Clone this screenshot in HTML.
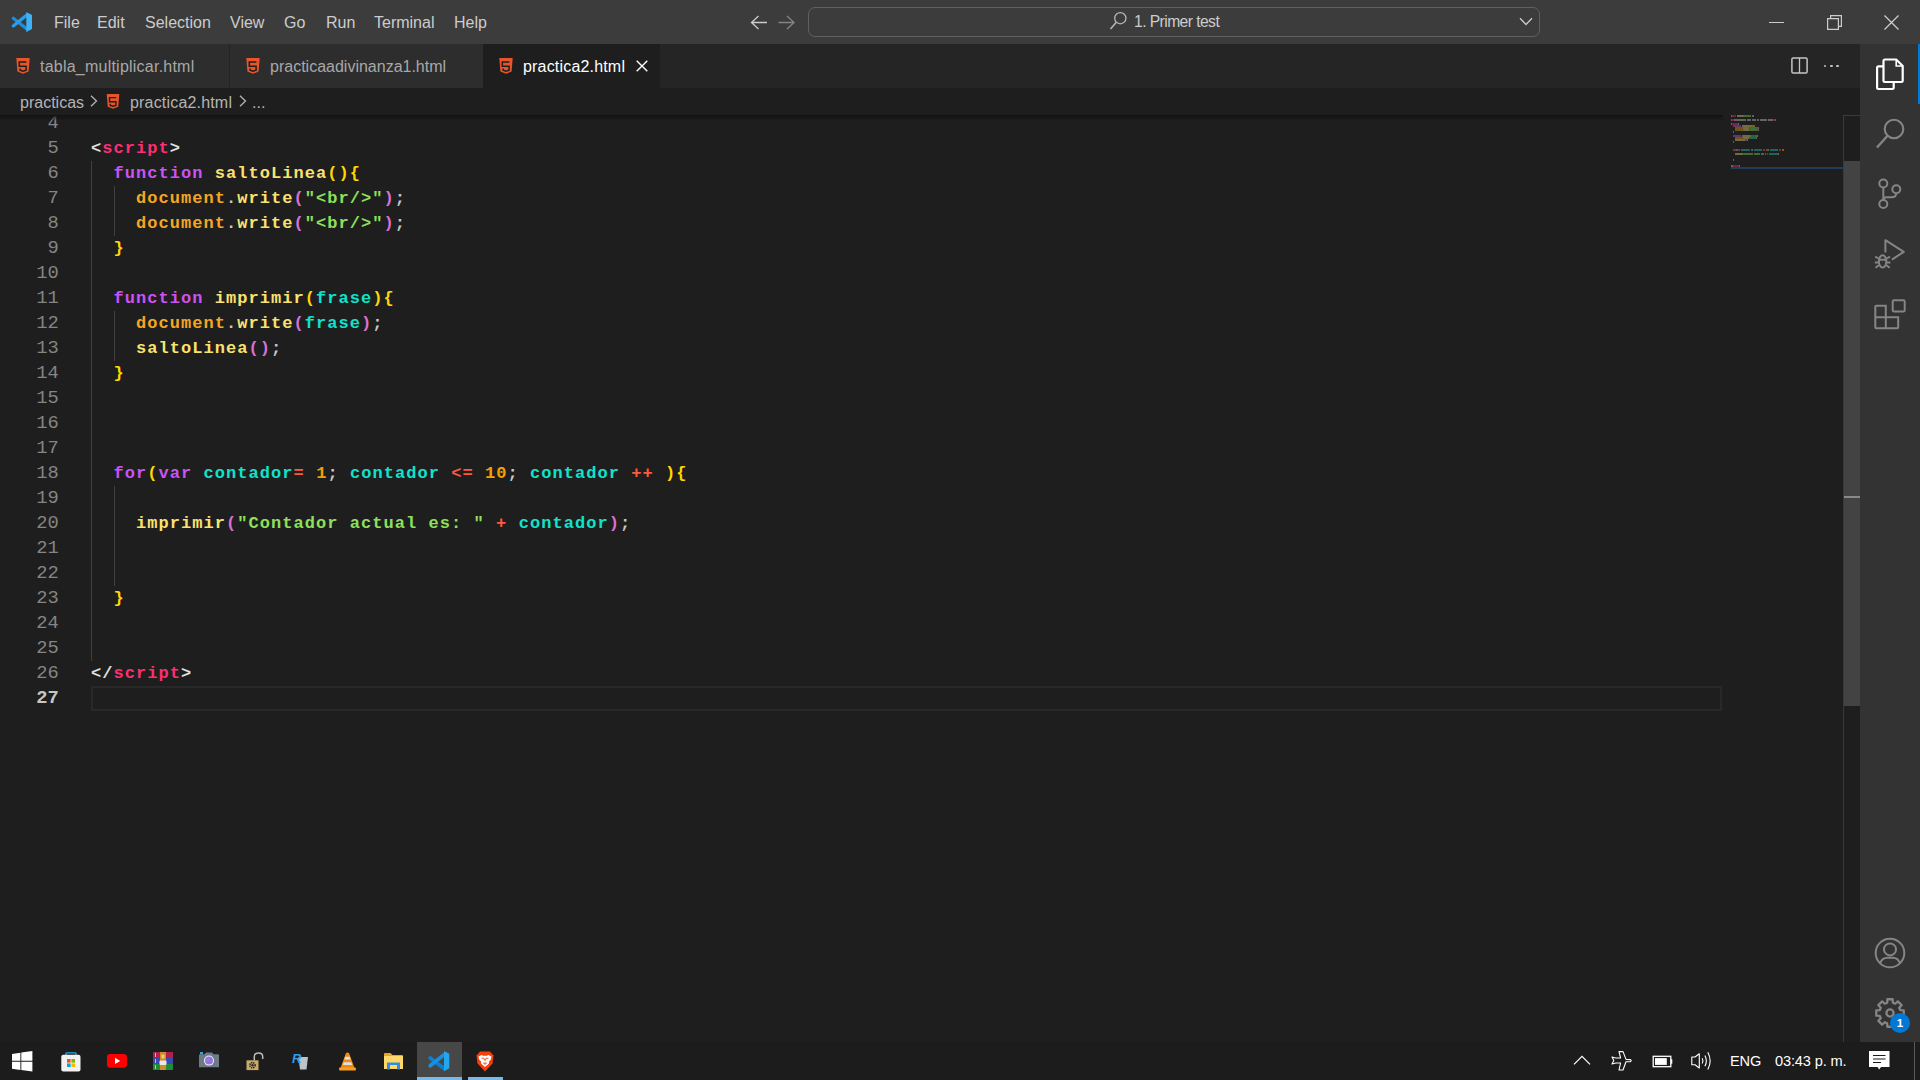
<!DOCTYPE html>
<html><head><meta charset="utf-8">
<style>
*{margin:0;padding:0;box-sizing:border-box}
html,body{width:1920px;height:1080px;overflow:hidden;background:#1e1e1e;font-family:"Liberation Sans",sans-serif}
.abs{position:absolute}
svg{position:absolute;overflow:visible}
#title{left:0;top:0;width:1920px;height:44px;background:#3c3c3c}
.menu{position:absolute;top:13px;font-size:16px;color:#cccccc;line-height:20px;white-space:nowrap}
#cc{left:808px;top:7px;width:732px;height:30px;border:1px solid #606060;border-radius:7px;background:#3c3c3c}
#cctxt{left:1134px;top:12.3px;font-size:15.7px;letter-spacing:-0.58px;line-height:20px;color:#cccccc;white-space:nowrap}
#tabs{left:0;top:44px;width:1860px;height:44px;background:#252526}
.tab{position:absolute;top:0;height:44px;background:#2d2d2d}
.tabtxt{position:absolute;top:13px;font-size:16px;line-height:20px;color:#a8a8a8;white-space:nowrap}
#crumbs{left:0;top:88px;width:1860px;height:27px;background:#1e1e1e}
.crumb{position:absolute;top:5px;font-size:16px;line-height:20px;color:#b4b4b4;white-space:nowrap}
#editor{left:0;top:115px;width:1860px;height:927px;background:#1e1e1e;overflow:hidden}
#shadow{left:0;top:0;width:1843px;height:6px;background:linear-gradient(#121212,rgba(30,30,30,0))}
.ln{position:absolute;left:0;width:58.8px;text-align:right;font-family:"Liberation Mono",monospace;font-size:18.75px;line-height:25px;height:25px;color:#858585;white-space:pre}
.ln.cur{color:#c6c6c6;font-weight:bold}
.cl{position:absolute;left:91px;font-family:"Liberation Mono",monospace;font-weight:bold;font-size:17px;letter-spacing:1.05px;line-height:25px;height:25px;color:#d4d4d4;white-space:pre}
.guide{position:absolute;width:1px;background:#404040}
#curline{left:91px;top:571px;width:1631px;height:25px;border:2px solid #282828}
#minimap{left:1731px;top:0}
.mm{position:absolute;height:1px;margin-top:0.5px;opacity:.75}
#vscroll{left:1843px;top:0;width:17px;height:927px;border-left:1px solid #3a3a3a;border-top:1px solid #3a3a3a}
#slider{left:1844px;top:46px;width:16px;height:545px;background:#434343}
#activity{left:1860px;top:44px;width:60px;height:998px;background:#333333}
#taskbar{left:0;top:1042px;width:1920px;height:38px;background:#1c1c1c}
.tray{position:absolute;top:9px;font-size:14.6px;letter-spacing:-0.15px;line-height:20px;color:#ffffff;white-space:nowrap}
/* token colors */
.t{color:#e0e0e0}.tg{color:#ff2d73}.kw{color:#cc52f5}.fn{color:#fbe26e}.ob{color:#f5a623}
.br1{color:#ffd700}.br2{color:#da70d6}.st{color:#8ee05a}.pr{color:#0fe3cc}.op{color:#ff5a3c}.nu{color:#f5a000}.pu{color:#c8c8c8}
</style></head><body>
<svg width="0" height="0" style="position:absolute">
  <defs>
    <symbol id="h5" viewBox="0 0 14 16">
      <path d="M0.3 0H13.7L12.6 13.6L7 15.8L1.4 13.6Z" fill="#e8552a"/>
      <path d="M10.4 3.9H3.3V8.3H10.1V12.2L7 13.1L4.1 12.2V10.4" fill="none" stroke="#1e1e1e" stroke-width="1.5"/>
    </symbol>
  </defs>
</svg>
<!-- TITLE BAR -->
<div id="title" class="abs">
  <svg style="left:0;top:0" width="44" height="44" viewBox="0 0 44 44">
    <path d="M13.3 18.3 26.5 28.8" stroke="#1c8fdc" stroke-width="3.2" stroke-linecap="round"/>
    <path d="M26.5 15.2 13.3 25.9" stroke="#2a9fe8" stroke-width="3.2" stroke-linecap="round"/>
    <path d="M26.3 11.9 32 14.9V29.1L26.3 32Z" fill="#3cb3f7"/>
  </svg>
  <div class="menu" style="left:54px">File</div>
  <div class="menu" style="left:97px">Edit</div>
  <div class="menu" style="left:145px">Selection</div>
  <div class="menu" style="left:230px">View</div>
  <div class="menu" style="left:284px">Go</div>
  <div class="menu" style="left:326px">Run</div>
  <div class="menu" style="left:374px">Terminal</div>
  <div class="menu" style="left:454px">Help</div>
  <!-- nav arrows -->
  <svg style="left:750px;top:15px" width="18" height="15" viewBox="0 0 18 15">
    <path d="M8.5 1 1.5 7.5 8.5 14M1.5 7.5H17" fill="none" stroke="#cccccc" stroke-width="1.3"/>
  </svg>
  <svg style="left:778px;top:15px" width="18" height="15" viewBox="0 0 18 15">
    <path d="M9 1 16 7.5 9 14M16 7.5H0.5" fill="none" stroke="#858585" stroke-width="1.3"/>
  </svg>
  <div id="cc" class="abs"></div>
  <svg style="left:1109px;top:11px" width="20" height="20" viewBox="0 0 20 20">
    <circle cx="11.3" cy="7.2" r="5.6" fill="none" stroke="#b8b8b8" stroke-width="1.3"/>
    <path d="M7.3 11.3 1.5 18" stroke="#b8b8b8" stroke-width="1.5" fill="none"/>
  </svg>
  <div id="cctxt" class="abs">1. Primer test</div>
  <svg style="left:1519px;top:17px" width="14" height="9" viewBox="0 0 14 9">
    <path d="M1 1.2 7 7.5 13 1.2" fill="none" stroke="#cccccc" stroke-width="1.3"/>
  </svg>
  <!-- window controls -->
  <div class="abs" style="left:1769px;top:21.5px;width:15px;height:1.2px;background:#cccccc"></div>
  <svg style="left:1827px;top:15px" width="15" height="15" viewBox="0 0 15 15">
    <path d="M0.6 3.6H11.4V14.4H0.6Z" fill="none" stroke="#cccccc" stroke-width="1.2"/>
    <path d="M3.6 3.6V0.6H14.4V11.4H11.4" fill="none" stroke="#cccccc" stroke-width="1.2"/>
  </svg>
  <svg style="left:1884px;top:15px" width="15" height="15" viewBox="0 0 15 15">
    <path d="M0.5 0.5 14.5 14.5M14.5 0.5 0.5 14.5" fill="none" stroke="#cccccc" stroke-width="1.3"/>
  </svg>
</div>
<!-- TABS -->
<div id="tabs" class="abs">
  <div class="tab" style="left:0;width:229px"></div>
  <div class="tab" style="left:230px;width:253px"></div>
  <div class="tab" style="left:483px;width:177px;background:#1e1e1e"></div>
  <svg style="left:16px;top:14px" width="14" height="16"><use href="#h5"/></svg>
  <div class="tabtxt" style="left:40px;letter-spacing:0.23px">tabla_multiplicar.html</div>
  <svg style="left:246px;top:14px" width="14" height="16"><use href="#h5"/></svg>
  <div class="tabtxt" style="left:270px">practicaadivinanza1.html</div>
  <svg style="left:499px;top:14px" width="14" height="16"><use href="#h5"/></svg>
  <div class="tabtxt" style="left:523px;color:#ffffff;letter-spacing:0.18px">practica2.html</div>
  <svg style="left:636px;top:16px" width="12" height="12" viewBox="0 0 12 12">
    <path d="M0.7 0.7 11.3 11.3M11.3 0.7 0.7 11.3" fill="none" stroke="#ffffff" stroke-width="1.4"/>
  </svg>
  <svg style="left:1791px;top:13px" width="17" height="17" viewBox="0 0 17 17">
    <rect x="0.9" y="0.9" width="15.2" height="15.2" rx="1.3" fill="none" stroke="#c5c5c5" stroke-width="1.5"/>
    <path d="M8.5 1V16" stroke="#c5c5c5" stroke-width="1.3"/>
  </svg>
  <div class="abs" style="left:1823.8px;top:20.6px;width:2.6px;height:2.6px;background:#c5c5c5;border-radius:1px"></div>
  <div class="abs" style="left:1830px;top:20.6px;width:2.6px;height:2.6px;background:#c5c5c5;border-radius:1px"></div>
  <div class="abs" style="left:1836.2px;top:20.6px;width:2.6px;height:2.6px;background:#c5c5c5;border-radius:1px"></div>
</div>
<!-- BREADCRUMBS -->
<div id="crumbs" class="abs">
  <div class="crumb" style="left:20px">practicas</div>
  <svg style="left:89.5px;top:7px" width="8" height="12" viewBox="0 0 8 12">
    <path d="M1 0.7 6.5 6 1 11.3" fill="none" stroke="#b4b4b4" stroke-width="1.3"/>
  </svg>
  <svg style="left:106px;top:5.5px" width="14" height="15"><use href="#h5"/></svg>
  <div class="crumb" style="left:130px;letter-spacing:0.18px">practica2.html</div>
  <svg style="left:238.5px;top:7px" width="8" height="12" viewBox="0 0 8 12">
    <path d="M1 0.7 6.5 6 1 11.3" fill="none" stroke="#b4b4b4" stroke-width="1.3"/>
  </svg>
  <div class="crumb" style="left:252px">...</div>
</div>
<div id="editor" class="abs">
<div class="guide" style="left:91px;top:46px;height:500px"></div>
<div class="guide" style="left:114px;top:71px;height:50px"></div>
<div class="guide" style="left:114px;top:196px;height:50px"></div>
<div class="guide" style="left:114px;top:371px;height:100px"></div>
<div id="curline" class="abs"></div>
<div class="ln" style="top:-4px">4</div>
<div class="ln" style="top:21px">5</div>
<div class="ln" style="top:46px">6</div>
<div class="ln" style="top:71px">7</div>
<div class="ln" style="top:96px">8</div>
<div class="ln" style="top:121px">9</div>
<div class="ln" style="top:146px">10</div>
<div class="ln" style="top:171px">11</div>
<div class="ln" style="top:196px">12</div>
<div class="ln" style="top:221px">13</div>
<div class="ln" style="top:246px">14</div>
<div class="ln" style="top:271px">15</div>
<div class="ln" style="top:296px">16</div>
<div class="ln" style="top:321px">17</div>
<div class="ln" style="top:346px">18</div>
<div class="ln" style="top:371px">19</div>
<div class="ln" style="top:396px">20</div>
<div class="ln" style="top:421px">21</div>
<div class="ln" style="top:446px">22</div>
<div class="ln" style="top:471px">23</div>
<div class="ln" style="top:496px">24</div>
<div class="ln" style="top:521px">25</div>
<div class="ln" style="top:546px">26</div>
<div class="ln cur" style="top:571px">27</div>
<div class="cl" style="top:21px"><span class="t">&lt;</span><span class="tg">script</span><span class="t">&gt;</span></div>
<div class="cl" style="top:46px"><span class="t">  </span><span class="kw">function</span><span class="t"> </span><span class="fn">saltoLinea</span><span class="br1">()</span><span class="br1">{</span></div>
<div class="cl" style="top:71px"><span class="t">    </span><span class="ob">document</span><span class="pu">.</span><span class="fn">write</span><span class="br2">(</span><span class="st">"&lt;br/&gt;"</span><span class="br2">)</span><span class="pu">;</span></div>
<div class="cl" style="top:96px"><span class="t">    </span><span class="ob">document</span><span class="pu">.</span><span class="fn">write</span><span class="br2">(</span><span class="st">"&lt;br/&gt;"</span><span class="br2">)</span><span class="pu">;</span></div>
<div class="cl" style="top:121px"><span class="t">  </span><span class="br1">}</span></div>
<div class="cl" style="top:171px"><span class="t">  </span><span class="kw">function</span><span class="t"> </span><span class="fn">imprimir</span><span class="br1">(</span><span class="pr">frase</span><span class="br1">)</span><span class="br1">{</span></div>
<div class="cl" style="top:196px"><span class="t">    </span><span class="ob">document</span><span class="pu">.</span><span class="fn">write</span><span class="br2">(</span><span class="pr">frase</span><span class="br2">)</span><span class="pu">;</span></div>
<div class="cl" style="top:221px"><span class="t">    </span><span class="fn">saltoLinea</span><span class="br2">()</span><span class="pu">;</span></div>
<div class="cl" style="top:246px"><span class="t">  </span><span class="br1">}</span></div>
<div class="cl" style="top:346px"><span class="t">  </span><span class="kw">for</span><span class="br1">(</span><span class="kw">var</span><span class="t"> </span><span class="pr">contador</span><span class="op">=</span><span class="t"> </span><span class="nu">1</span><span class="pu">;</span><span class="t"> </span><span class="pr">contador</span><span class="t"> </span><span class="op">&lt;=</span><span class="t"> </span><span class="nu">10</span><span class="pu">;</span><span class="t"> </span><span class="pr">contador</span><span class="t"> </span><span class="op">++</span><span class="t"> </span><span class="br1">)</span><span class="br1">{</span></div>
<div class="cl" style="top:396px"><span class="t">    </span><span class="fn">imprimir</span><span class="br2">(</span><span class="st">"Contador actual es: "</span><span class="t"> </span><span class="op">+</span><span class="t"> </span><span class="pr">contador</span><span class="br2">)</span><span class="pu">;</span></div>
<div class="cl" style="top:471px"><span class="t">  </span><span class="br1">}</span></div>
<div class="cl" style="top:546px"><span class="t">&lt;/</span><span class="tg">script</span><span class="t">&gt;</span></div>
<svg style="left:1731px;top:0" width="112" height="60" viewBox="0 0 112 60"><g opacity="0.6"><rect x="0" y="0.35" width="1" height="1.3" fill="#c8c8c8"/><rect x="1" y="0.35" width="4" height="1.3" fill="#ff2d73"/><rect x="6" y="0.35" width="6" height="1.3" fill="#f8e47a"/><rect x="12" y="0.35" width="1" height="1.3" fill="#c8c8c8"/><rect x="13" y="0.35" width="7" height="1.3" fill="#8ee05a"/><rect x="21" y="0.35" width="2" height="1.3" fill="#c8c8c8"/><rect x="0" y="4.35" width="1" height="1.3" fill="#c8c8c8"/><rect x="1" y="4.35" width="2" height="1.3" fill="#ff2d73"/><rect x="3" y="4.35" width="12" height="1.3" fill="#d0d0d0"/><rect x="16" y="4.35" width="4" height="1.3" fill="#d0d0d0"/><rect x="21" y="4.35" width="4" height="1.3" fill="#d0d0d0"/><rect x="26" y="4.35" width="2" height="1.3" fill="#d0d0d0"/><rect x="29" y="4.35" width="7" height="1.3" fill="#d0d0d0"/><rect x="37" y="4.35" width="5" height="1.3" fill="#d0d0d0"/><rect x="42" y="4.35" width="2" height="1.3" fill="#ff2d73"/><rect x="44" y="4.35" width="1" height="1.3" fill="#c8c8c8"/><rect x="0" y="8.35" width="1" height="1.3" fill="#d0d0d0"/><rect x="1" y="8.35" width="6" height="1.3" fill="#ff2d73"/><rect x="7" y="8.35" width="1" height="1.3" fill="#d0d0d0"/><rect x="2" y="10.35" width="8" height="1.3" fill="#c95cf0"/><rect x="11" y="10.35" width="10" height="1.3" fill="#f8e47a"/><rect x="21" y="10.35" width="2" height="1.3" fill="#ffd700"/><rect x="23" y="10.35" width="1" height="1.3" fill="#ffd700"/><rect x="4" y="12.35" width="8" height="1.3" fill="#f5a623"/><rect x="12" y="12.35" width="1" height="1.3" fill="#c8c8c8"/><rect x="13" y="12.35" width="5" height="1.3" fill="#f8e47a"/><rect x="18" y="12.35" width="1" height="1.3" fill="#da70d6"/><rect x="19" y="12.35" width="7" height="1.3" fill="#8ee05a"/><rect x="26" y="12.35" width="1" height="1.3" fill="#da70d6"/><rect x="27" y="12.35" width="1" height="1.3" fill="#c8c8c8"/><rect x="4" y="14.35" width="8" height="1.3" fill="#f5a623"/><rect x="12" y="14.35" width="1" height="1.3" fill="#c8c8c8"/><rect x="13" y="14.35" width="5" height="1.3" fill="#f8e47a"/><rect x="18" y="14.35" width="1" height="1.3" fill="#da70d6"/><rect x="19" y="14.35" width="7" height="1.3" fill="#8ee05a"/><rect x="26" y="14.35" width="1" height="1.3" fill="#da70d6"/><rect x="27" y="14.35" width="1" height="1.3" fill="#c8c8c8"/><rect x="2" y="16.35" width="1" height="1.3" fill="#ffd700"/><rect x="2" y="20.35" width="8" height="1.3" fill="#c95cf0"/><rect x="11" y="20.35" width="8" height="1.3" fill="#f8e47a"/><rect x="19" y="20.35" width="1" height="1.3" fill="#ffd700"/><rect x="20" y="20.35" width="5" height="1.3" fill="#1ad9bb"/><rect x="25" y="20.35" width="1" height="1.3" fill="#ffd700"/><rect x="26" y="20.35" width="1" height="1.3" fill="#ffd700"/><rect x="4" y="22.35" width="8" height="1.3" fill="#f5a623"/><rect x="12" y="22.35" width="1" height="1.3" fill="#c8c8c8"/><rect x="13" y="22.35" width="5" height="1.3" fill="#f8e47a"/><rect x="18" y="22.35" width="1" height="1.3" fill="#da70d6"/><rect x="19" y="22.35" width="5" height="1.3" fill="#1ad9bb"/><rect x="24" y="22.35" width="1" height="1.3" fill="#da70d6"/><rect x="25" y="22.35" width="1" height="1.3" fill="#c8c8c8"/><rect x="4" y="24.35" width="10" height="1.3" fill="#f8e47a"/><rect x="14" y="24.35" width="2" height="1.3" fill="#da70d6"/><rect x="16" y="24.35" width="1" height="1.3" fill="#c8c8c8"/><rect x="2" y="26.35" width="1" height="1.3" fill="#ffd700"/><rect x="2" y="34.35" width="3" height="1.3" fill="#c95cf0"/><rect x="5" y="34.35" width="1" height="1.3" fill="#ffd700"/><rect x="6" y="34.35" width="3" height="1.3" fill="#c95cf0"/><rect x="10" y="34.35" width="8" height="1.3" fill="#1ad9bb"/><rect x="18" y="34.35" width="1" height="1.3" fill="#ff5a3c"/><rect x="20" y="34.35" width="1" height="1.3" fill="#f5a000"/><rect x="21" y="34.35" width="1" height="1.3" fill="#c8c8c8"/><rect x="23" y="34.35" width="8" height="1.3" fill="#1ad9bb"/><rect x="32" y="34.35" width="2" height="1.3" fill="#ff5a3c"/><rect x="35" y="34.35" width="2" height="1.3" fill="#f5a000"/><rect x="37" y="34.35" width="1" height="1.3" fill="#c8c8c8"/><rect x="39" y="34.35" width="8" height="1.3" fill="#1ad9bb"/><rect x="48" y="34.35" width="2" height="1.3" fill="#ff5a3c"/><rect x="51" y="34.35" width="1" height="1.3" fill="#ffd700"/><rect x="52" y="34.35" width="1" height="1.3" fill="#ffd700"/><rect x="4" y="38.35" width="8" height="1.3" fill="#f8e47a"/><rect x="12" y="38.35" width="1" height="1.3" fill="#da70d6"/><rect x="13" y="38.35" width="9" height="1.3" fill="#8ee05a"/><rect x="23" y="38.35" width="6" height="1.3" fill="#8ee05a"/><rect x="30" y="38.35" width="3" height="1.3" fill="#8ee05a"/><rect x="34" y="38.35" width="1" height="1.3" fill="#8ee05a"/><rect x="36" y="38.35" width="1" height="1.3" fill="#ff5a3c"/><rect x="38" y="38.35" width="8" height="1.3" fill="#1ad9bb"/><rect x="46" y="38.35" width="1" height="1.3" fill="#da70d6"/><rect x="47" y="38.35" width="1" height="1.3" fill="#c8c8c8"/><rect x="2" y="44.35" width="1" height="1.3" fill="#ffd700"/><rect x="0" y="50.35" width="2" height="1.3" fill="#d0d0d0"/><rect x="2" y="50.35" width="6" height="1.3" fill="#ff2d73"/><rect x="8" y="50.35" width="1" height="1.3" fill="#d0d0d0"/></g><rect x="0" y="52" width="112" height="2" fill="#223d58"/></svg>
<div id="shadow" class="abs" style="width:1723px"></div>
<div id="vscroll" class="abs"></div>
<div id="slider" class="abs"></div>
<div class="abs" style="left:1844px;top:381px;width:16px;height:2px;background:#8a8a8a"></div>
</div>
<!-- ACTIVITY BAR -->
<div id="activity" class="abs">
  <div class="abs" style="left:58px;top:0;width:2px;height:60px;background:#0078d4"></div>
  <!-- explorer -->
  <svg style="left:16px;top:14px" width="28" height="32" viewBox="0 0 28 32">
    <path d="M7.5 8.3H2.5Q1.1 8.3 1.1 9.7V29.6Q1.1 31 2.5 31H16.3Q17.7 31 17.7 29.6V24.5" fill="none" stroke="#ffffff" stroke-width="2.2"/>
    <path d="M8.9 1.5H20.2L26.7 8V22.6Q26.7 24 25.3 24H8.9Q7.5 24 7.5 22.6V2.9Q7.5 1.5 8.9 1.5Z" fill="none" stroke="#ffffff" stroke-width="2.2"/>
    <path d="M20.2 1.5V8H26.7" fill="none" stroke="#ffffff" stroke-width="1.6"/>
  </svg>
  <!-- search -->
  <svg style="left:14px;top:74px" width="32" height="32" viewBox="0 0 32 32">
    <circle cx="20" cy="11" r="9.3" fill="none" stroke="#858585" stroke-width="2.1"/>
    <path d="M13.5 17.8 3 29.5" stroke="#858585" stroke-width="2.4" fill="none"/>
  </svg>
  <!-- source control -->
  <svg style="left:14px;top:134px" width="32" height="32" viewBox="0 0 32 32">
    <circle cx="9.3" cy="5.5" r="4" fill="none" stroke="#858585" stroke-width="2"/>
    <circle cx="9.3" cy="26" r="4" fill="none" stroke="#858585" stroke-width="2"/>
    <circle cx="22.3" cy="11.3" r="4" fill="none" stroke="#858585" stroke-width="2"/>
    <path d="M9.3 9.5V22M22.3 15.3Q22.3 19.3 17.5 19.3H12.5Q9.3 19.3 9.3 22" fill="none" stroke="#858585" stroke-width="2"/>
  </svg>
  <!-- run & debug -->
  <svg style="left:14px;top:194px" width="32" height="32" viewBox="0 0 32 32">
    <path d="M11.4 14.5V2.2L29.8 13.8 17.9 21.6" fill="none" stroke="#858585" stroke-width="2" stroke-linejoin="round"/>
    <ellipse cx="8.6" cy="23.4" rx="3.7" ry="6.2" fill="none" stroke="#858585" stroke-width="2"/>
    <path d="M4.8 21.7H12.4M1.2 18.6 4.6 20.5M16 18.6 12.6 20.5M0.8 24.5H4.8M12.4 24.5H16.4M1.5 29.8 4.8 27.3M15.7 29.8 12.4 27.3" fill="none" stroke="#858585" stroke-width="2"/>
  </svg>
  <!-- extensions -->
  <svg style="left:14px;top:254px" width="32" height="32" viewBox="0 0 32 32">
    <path d="M2.3 7.8H11.8V19.3H24.2V29.2Q24.2 30.2 23.2 30.2H2.3Q1.3 30.2 1.3 29.2V8.8Q1.3 7.8 2.3 7.8ZM1.3 19.3H11.8V30.2" fill="none" stroke="#858585" stroke-width="2"/>
    <rect x="18.7" y="2.3" width="12" height="11.2" rx="1.3" fill="none" stroke="#858585" stroke-width="2"/>
  </svg>
  <!-- accounts -->
  <svg style="left:14px;top:893px" width="32" height="32" viewBox="0 0 32 32">
    <circle cx="16" cy="16" r="14.3" fill="none" stroke="#858585" stroke-width="2"/>
    <circle cx="16" cy="12.4" r="6" fill="none" stroke="#858585" stroke-width="2"/>
    <path d="M5.8 26.6Q8 20.8 13.3 20.8H18.7Q24 20.8 26.2 26.6" fill="none" stroke="#858585" stroke-width="2"/>
  </svg>
  <!-- settings -->
  <svg style="left:14px;top:953px" width="32" height="32" viewBox="0 0 32 32">
    <path d="M13.17 5.79 L13.33 2.26 L18.67 2.26 L18.83 5.79 L21.22 6.77 L23.83 4.39 L27.61 8.17 L25.23 10.78 L26.21 13.17 L29.74 13.33 L29.74 18.67 L26.21 18.83 L25.23 21.22 L27.61 23.83 L23.83 27.61 L21.22 25.23 L18.83 26.21 L18.67 29.74 L13.33 29.74 L13.17 26.21 L10.78 25.23 L8.17 27.61 L4.39 23.83 L6.77 21.22 L5.79 18.83 L2.26 18.67 L2.26 13.33 L5.79 13.17 L6.77 10.78 L4.39 8.17 L8.17 4.39 L10.78 6.77Z" fill="none" stroke="#858585" stroke-width="2.3" stroke-linejoin="round"/>
    <circle cx="16" cy="16" r="3.6" fill="none" stroke="#858585" stroke-width="2.3"/>
  </svg>
  <div class="abs" style="left:30px;top:969px;width:20px;height:20px;border-radius:10px;background:#0078d4;color:#fff;font-size:11.5px;font-weight:bold;line-height:20px;text-align:center">1</div>
</div>
<!-- TASKBAR -->
<div id="taskbar" class="abs">
  <!-- windows -->
  <svg style="left:12px;top:8.6px" width="20.4" height="20.6" viewBox="0 0 20.4 20.6">
    <path d="M0 2.9 8.4 1.7V9.8H0ZM9.3 1.6 20.4 0V9.8H9.3ZM0 10.7H8.4V18.9L0 17.7ZM9.3 10.7H20.4V20.6L9.3 19Z" fill="#ffffff"/>
  </svg>
  <!-- store -->
  <svg style="left:61px;top:9.5px" width="20" height="20" viewBox="0 0 20 20">
    <path d="M5 3.5V1.5Q5 0.8 5.7 0.8H14.3Q15 0.8 15 1.5V3.5" fill="none" stroke="#29a8e8" stroke-width="1.3"/>
    <rect x="0.3" y="2.8" width="19.2" height="16.6" rx="2" fill="#f2f2f2"/>
    <rect x="6" y="7" width="3.6" height="3.6" fill="#f25022"/><rect x="10.4" y="7" width="3.6" height="3.6" fill="#7fba00"/>
    <rect x="6" y="11.4" width="3.6" height="3.6" fill="#00a4ef"/><rect x="10.4" y="11.4" width="3.6" height="3.6" fill="#ffb900"/>
  </svg>
  <!-- youtube -->
  <svg style="left:107px;top:12px" width="20" height="14" viewBox="0 0 20 14">
    <rect x="0" y="0" width="20" height="13.8" rx="3.2" fill="#ff0000"/>
    <path d="M8 3.8 13.2 6.9 8 10Z" fill="#ffffff"/>
  </svg>
  <!-- winrar -->
  <svg style="left:153px;top:10px" width="20" height="18" viewBox="0 0 20 18">
    <rect x="0" y="0" width="20" height="6" fill="#b0204a"/>
    <rect x="0" y="6" width="20" height="6" fill="#3a48b0"/>
    <rect x="0" y="12" width="20" height="6" fill="#1f8a3a"/>
    <rect x="2" y="1" width="1" height="4" fill="#f0c040"/><rect x="2" y="7" width="1" height="4" fill="#f0c040"/><rect x="2" y="13" width="1" height="4" fill="#f0c040"/>
    <rect x="7" y="0" width="6" height="18" fill="#d08a30"/>
    <rect x="6.5" y="8.5" width="7" height="4.5" rx="1" fill="#e8e8e8"/>
    <rect x="8.5" y="2.5" width="3" height="4" rx="1" fill="#f0d060"/>
  </svg>
  <!-- camera -->
  <svg style="left:199px;top:10px" width="20" height="16" viewBox="0 0 20 16">
    <rect x="1" y="0" width="3" height="2.5" fill="#29a8e8"/>
    <path d="M0 3.5Q0 2.2 1.3 2.2H5.5L7 0.5H13L14.5 2.2H18.7Q20 2.2 20 3.5V15.3H0Z" fill="#6e7a86"/>
    <circle cx="10" cy="8.6" r="5" fill="#f0f0f0"/>
    <circle cx="10" cy="8.6" r="4" fill="#9a70e8"/>
    <circle cx="9" cy="7.5" r="2" fill="#7a90f0" opacity=".6"/>
  </svg>
  <!-- lock -->
  <svg style="left:246px;top:9.5px" width="18" height="19" viewBox="0 0 18 19">
    <path d="M8.3 8.5V4.5Q8.3 1 12.5 1Q16.7 1 16.7 4.5V7" fill="none" stroke="#bcbcbc" stroke-width="1.5"/>
    <rect x="0.5" y="8.3" width="12" height="9.8" fill="#c9aa68"/>
    <circle cx="6.5" cy="13.2" r="2.6" fill="none" stroke="#2a2a2a" stroke-width="1.6" stroke-dasharray="1.3 0.8"/>
    <circle cx="6.5" cy="13.2" r="1.2" fill="#2a2a2a"/>
  </svg>
  <!-- revo -->
  <svg style="left:292px;top:9.5px" width="17" height="18" viewBox="0 0 17 18">
    <path d="M6.5 5H16L14.5 17.5H8Z" fill="#d8e0e8" opacity=".85"/>
    <text x="0" y="11" font-family="Liberation Sans" font-style="italic" font-weight="bold" font-size="13" fill="#2e9ee8">R</text>
  </svg>
  <!-- vlc -->
  <svg style="left:339px;top:9.5px" width="17" height="19" viewBox="0 0 17 19">
    <path d="M7 1Q8.5 0 10 1L15.5 16H1.5Z" fill="#f08a10"/>
    <path d="M6.2 4.7H10.8L11.7 7.4H5.3ZM4.7 10.2H12.3L13.2 13H3.8Z" fill="#e0e0e0"/>
    <rect x="0" y="15.5" width="17" height="3" rx="1" fill="#f5a020"/>
  </svg>
  <!-- folder -->
  <svg style="left:384px;top:10.5px" width="19" height="17" viewBox="0 0 19 17">
    <path d="M0 1Q0 0 1 0H6.5L8.5 2H18Q19 2 19 3V16H0Z" fill="#e6a820"/>
    <rect x="0" y="3" width="19" height="13" fill="#ffd86a"/>
    <path d="M3 16.5V9.5H16V16.5H13V12H6V16.5Z" fill="#2f8ee0"/>
  </svg>
  <!-- vscode active -->
  <div class="abs" style="left:417px;top:0;width:45px;height:35px;background:#474747"></div>
  <div class="abs" style="left:417px;top:35px;width:45px;height:3px;background:#76b9ed"></div>
  <svg style="left:417px;top:0" width="44" height="38" viewBox="0 0 44 38">
    <path d="M13.2 16 27 26.6" stroke="#0b7fd0" stroke-width="3.8" stroke-linecap="round"/>
    <path d="M27 12.8 13.2 23.7" stroke="#1a8fe0" stroke-width="3.8" stroke-linecap="round"/>
    <path d="M27 9 32.3 11.8V26.3L27 29.2Z" fill="#23a6f0"/>
  </svg>
  <!-- brave -->
  <div class="abs" style="left:468px;top:35px;width:35px;height:3px;background:#76b9ed"></div>
  <svg style="left:476px;top:9px" width="18" height="21" viewBox="0 0 18 21">
    <path d="M4 0.5H14L17.5 4.5 16.5 12.5 9 20.5 1.5 12.5 0.5 4.5Z" fill="#f5400a"/>
    <path d="M2.5 5.5 5.5 4 8 5 9 4.5 10 5 12.5 4 15.5 5.5 14.8 8.5 13 10.5V12.5L9 16 5 12.5V10.5L3.2 8.5Z" fill="#ffffff"/>
    <path d="M5.5 7.2H8L8.5 9.5M12.5 7.2H10L9.5 9.5M7.5 12H10.5L9 13.5Z" fill="none" stroke="#f05a20" stroke-width="1"/>
  </svg>
  <!-- tray -->
  <svg style="left:1573px;top:13px" width="18" height="10" viewBox="0 0 18 10">
    <path d="M1 9.3 9 1.3 17 9.3" fill="none" stroke="#ffffff" stroke-width="1.2"/>
  </svg>
  <svg style="left:1611px;top:8px" width="21" height="21" viewBox="0 0 21 21">
    <path d="M12 1.6 15 9.4 19.5 9.6Q21 10.6 19.5 11.6L15 11.8 12 20H8L9.6 13H4.8L1 14 2.8 10.6 1 7 4.8 8H9.6L8 1.6Z" fill="none" stroke="#ffffff" stroke-width="1.1" stroke-linejoin="round"/>
  </svg>
  <svg style="left:1652px;top:13px" width="21" height="13" viewBox="0 0 21 13">
    <rect x="1.2" y="1.3" width="17.6" height="10.4" fill="none" stroke="#ffffff" stroke-width="1.3"/>
    <rect x="3" y="3.1" width="11.8" height="6.8" fill="#ffffff"/>
    <rect x="18.8" y="4.3" width="1.5" height="4.4" fill="#ffffff"/>
  </svg>
  <svg style="left:1691px;top:8px" width="22" height="22" viewBox="0 0 22 22">
    <path d="M0.8 7H4L8.3 3.8V18L4 14.8H0.8Z" fill="none" stroke="#ffffff" stroke-width="1.1" stroke-linejoin="round"/>
    <path d="M11.2 8.3Q12.6 10.9 11.2 13.5M13.9 5.5Q16.8 10.9 13.9 16.3M16.8 2.2Q21.5 10.9 16.8 19.6" fill="none" stroke="#ffffff" stroke-width="1.1"/>
  </svg>
  <div class="tray" style="left:1730px">ENG</div>
  <div class="tray" style="left:1775px">03:43 p. m.</div>
  <svg style="left:1869px;top:8.5px" width="21" height="21" viewBox="0 0 21 21">
    <path d="M0 0H20.5V16H12L10.2 18.5 8.5 16H0Z" fill="#ffffff"/>
    <path d="M4 4.5H16.5M4 8H16.5M4 11.5H12" stroke="#1c1c1c" stroke-width="1.2"/>
  </svg>
  <div class="abs" style="left:1914px;top:0;width:1px;height:38px;background:#5a5a5a"></div>
</div>
</body></html>
